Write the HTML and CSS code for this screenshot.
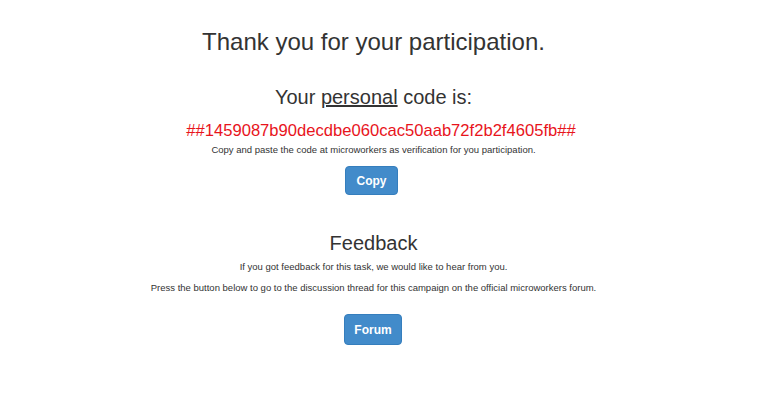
FILE: index.html
```html
<!DOCTYPE html>
<html>
<head>
<meta charset="utf-8">
<link rel="stylesheet" href="styles.css">
</head>
<body>
<div class="page">
  <h2 class="title">Thank you for your participation.</h2>
  <h3 class="code-label">Your <u>personal</u> code is:</h3>
  <div class="code">##1459087b90decdbe060cac50aab72f2b2f4605fb##</div>
  <p class="small">Copy and paste the code at microworkers as verification for you participation.</p>
  <button class="btn copy">Copy</button>
  <h3 class="feedback">Feedback</h3>
  <p class="small">If you got feedback for this task, we would like to hear from you.</p>
  <p class="small">Press the button below to go to the discussion thread for this campaign on the official microworkers forum.</p>
  <button class="btn forum">Forum</button>
</div>
</body>
</html>
```

FILE: styles.css
```css
html, body {
  margin: 0;
  padding: 0;
  background: #fff;
}
body {
  font-family: "Liberation Sans", Arial, sans-serif;
  color: #333;
}
.page {
  display: flex;
  flex-direction: column;
  align-items: center;
  padding: 0 10px 0 0;
  text-align: center;
}
.title {
  font-size: 24px;
  font-weight: normal;
  margin: 29px 0 0;
  line-height: 26px;
}
.code-label {
  font-size: 20px;
  font-weight: normal;
  margin: 31px 0 0;
  line-height: 22px;
}
.code {
  color: #e8141c;
  font-size: 16.6px;
  margin-top: 14px;
  line-height: 18px;
  padding-left: 15px;
}
.small {
  font-size: 9.5px;
  margin: 3px 0 0;
  line-height: 14px;
}
.btn {
  font-family: "Liberation Sans", Arial, sans-serif;
  background: #428bca;
  border: 1px solid #357ebd;
  border-radius: 4px;
  color: #fff;
  font-weight: bold;
  font-size: 12px;
}
.copy {
  width: 53px;
  height: 29px;
  margin-top: 9px;
  margin-right: 4px;
}
.feedback {
  font-size: 20px;
  font-weight: normal;
  margin: 37px 0 0;
  line-height: 22px;
}
.feedback + .small {
  margin-top: 6px;
}
.small + .small {
  margin-top: 7px;
}
.forum {
  width: 58px;
  height: 31px;
  margin-top: 19px;
  margin-right: 1px;
}
```
